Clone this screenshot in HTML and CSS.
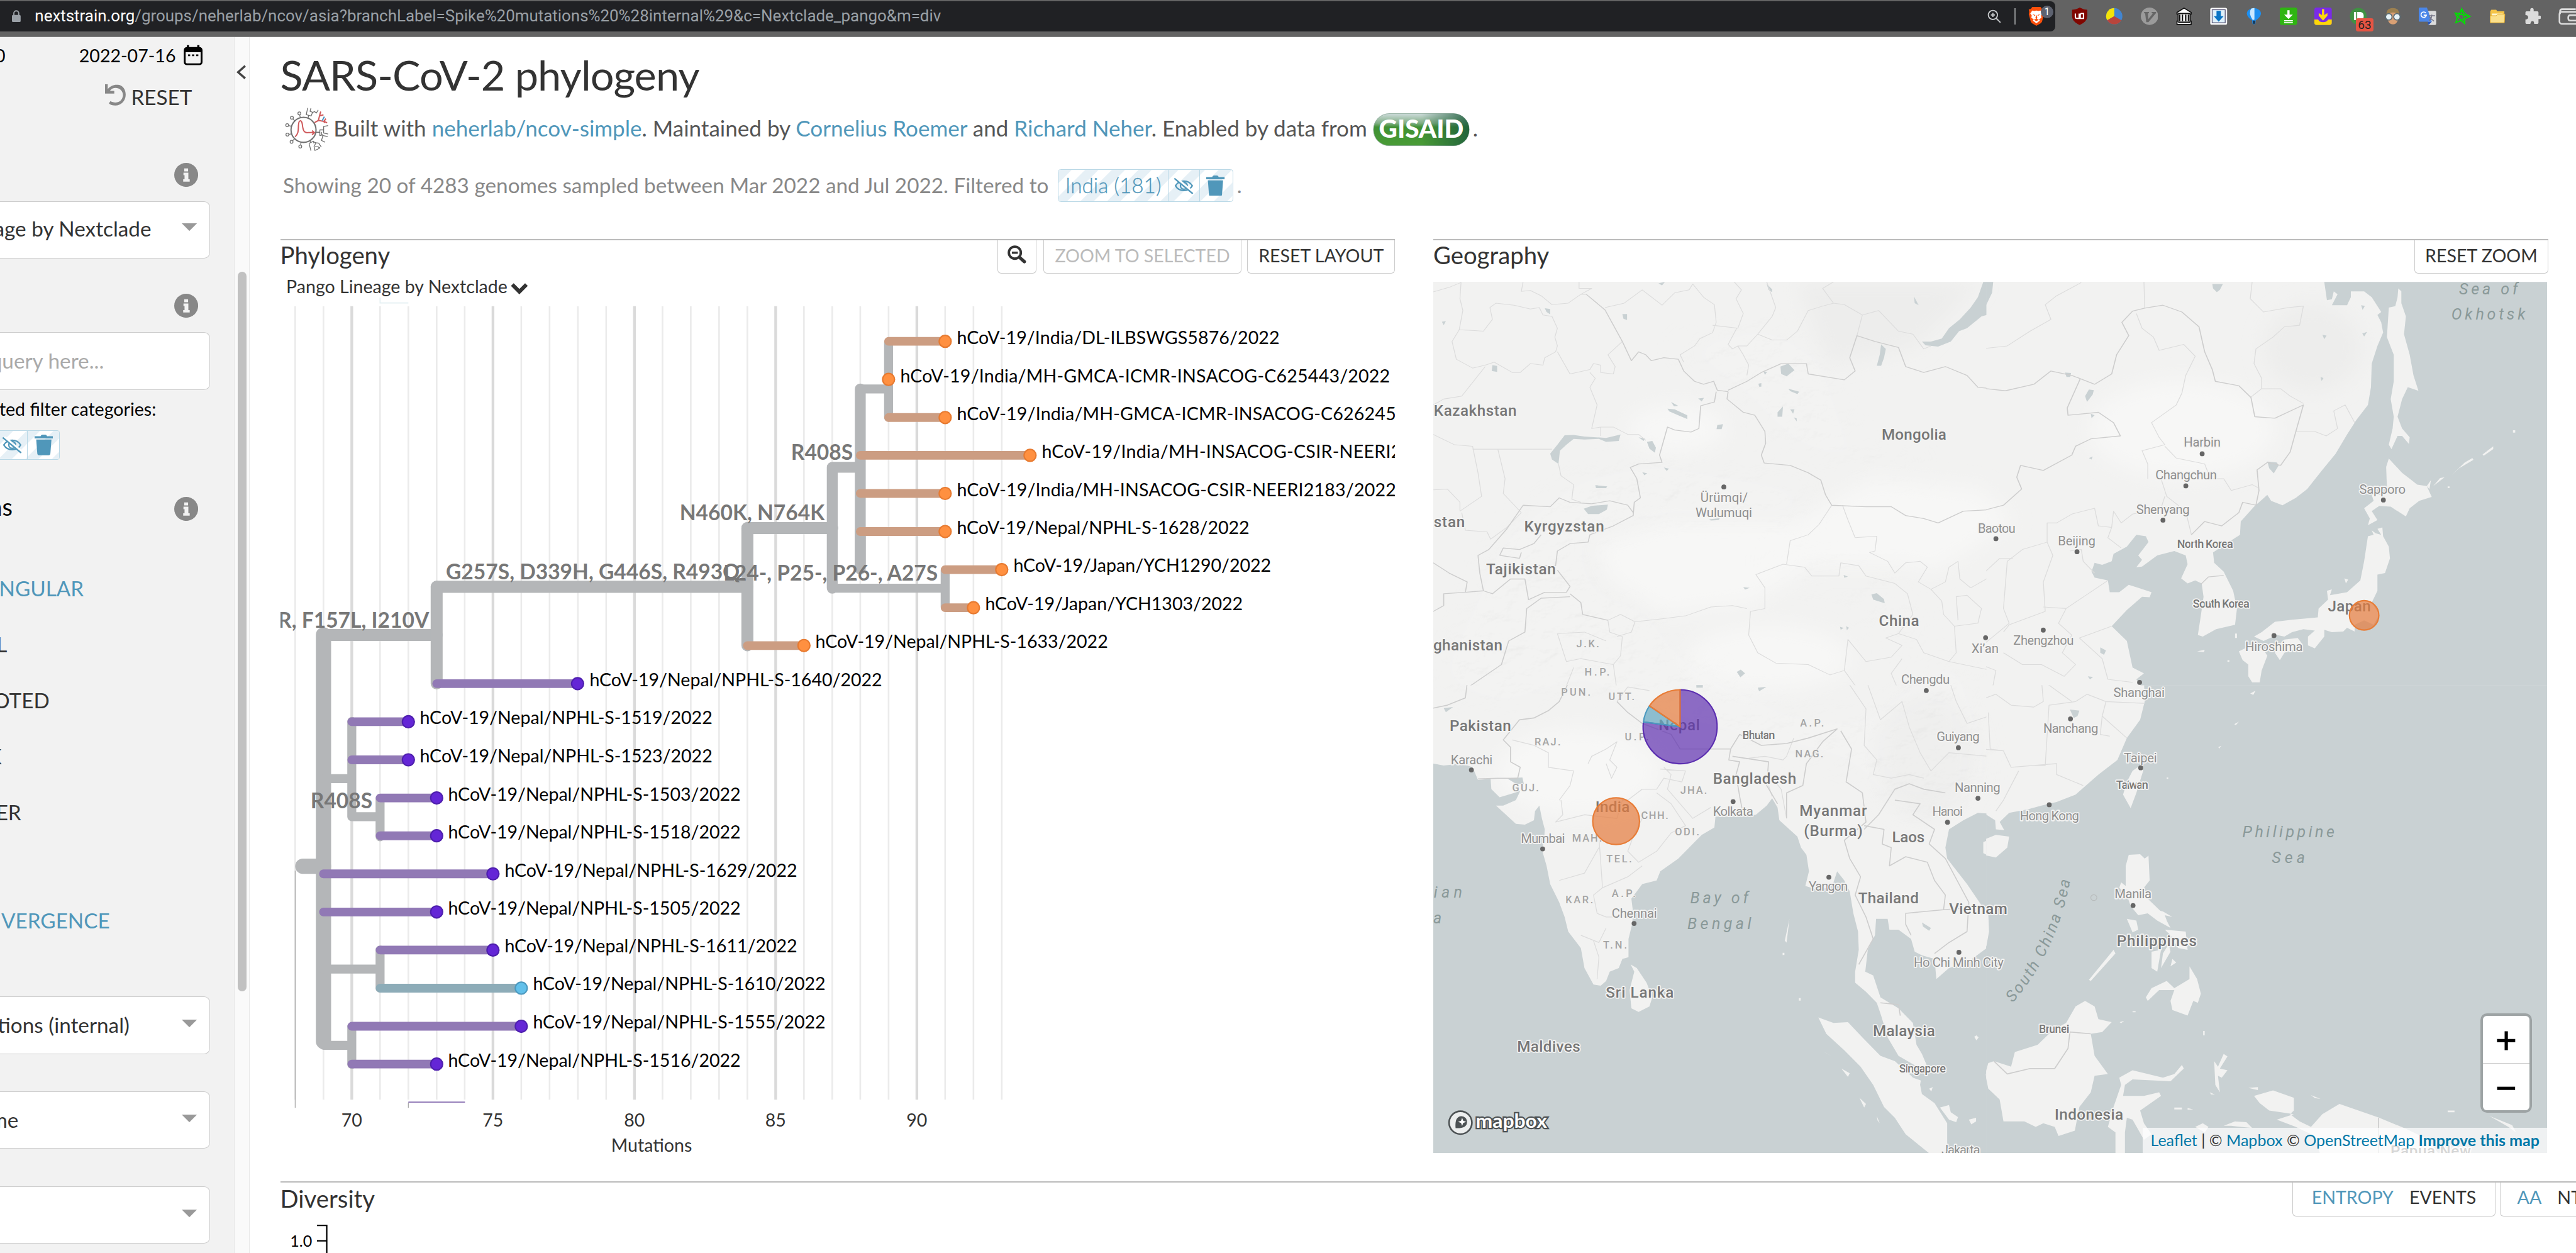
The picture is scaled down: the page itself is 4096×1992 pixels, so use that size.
FILE: index.html
```html
<!DOCTYPE html>
<html lang="en">
<head>
<meta charset="utf-8">
<title>SARS-CoV-2 phylogeny</title>
<link rel="stylesheet" href="styles.css">
</head>
<body>
<svg class="defs" width="0" height="0" aria-hidden="true">
  <defs>
    <pattern id="stripes" width="30" height="30" patternUnits="userSpaceOnUse" patternTransform="rotate(45)"><rect width="15" height="30" fill="#e6f0f6"/></pattern>
    <symbol id="i-info" viewBox="0 0 44 44"><circle cx="22" cy="22" r="22" fill="#888"/><path d="M17 18h9v12h2.500v4.500h-12v-4.500h2.500v-7.500h-2zM18.500 10h7v5.500h-7z" fill="#f2f2f2"/></symbol>
    <symbol id="i-caret" viewBox="0 0 28 14"><path d="M0 0h28L14 14z" fill="#999"/></symbol>
    <symbol id="i-eye" viewBox="0 0 38 32"><g fill="none" stroke="#5097ba" stroke-width="2.600" stroke-linecap="round"><path d="M3 16C10 4 28 4 35 16C28 28 10 28 3 16z"/><circle cx="19" cy="16" r="6.500"/><path d="M19 12a4 4 0 0 1 4 4"/></g><path d="M4 1L37 29" stroke="#fff" stroke-width="5"/><path d="M1 2L36 31" stroke="#5097ba" stroke-width="2.800"/></symbol>
    <symbol id="i-trash" viewBox="0 0 34 38"><path d="M0 3h11q1-3 3-3h6q2 0 3 3h11v4H0zM3 9h28l-2 26q-.3 3-3 3H8q-2.700 0-3-3z" fill="#5097ba"/></symbol>
  </defs>
</svg>

<header class="browser">
  <div class="omnibox">
    <svg class="lock" viewBox="0 0 16 22"><rect y="9" width="16" height="13" rx="2" fill="#9aa0a6"/><path d="M3.500 10V6a4.500 4.500 0 0 1 9 0v4" fill="none" stroke="#9aa0a6" stroke-width="2.200"/></svg>
    <p class="url"><b>nextstrain.org</b>/groups/neherlab/ncov/asia?branchLabel=Spike%20mutations%20%28internal%29&amp;c=Nextclade_pango&amp;m=div</p>
    <svg class="magnify" viewBox="0 0 28 28"><g fill="none" stroke="#c4c7c9" stroke-width="2.400"><circle cx="11" cy="11" r="9"/><path d="M17.500 17.500L26 26M11 7v8M7 11h8"/></g></svg>
    <i class="bar"></i>
    <span class="shield">
      <svg viewBox="0 0 32 38"><path d="M8 1h16l3 4 4 1-1 5 1 4-4 15q-1 2-3 3.500L16 38l-8-4.500Q6 32 5 30L1 15l1-4-1-5 4-1z" fill="#fb4f0b"/><path d="M8 8l4 1 4-1 4 1 4-1 4 6-3 4 1 4-5 4 2 2-7 5-7-5 2-2-5-4 1-4-3-4z" fill="#fff"/><path d="M8 15l6 2-1 2zM24 15l-6 2 1 2zM16 16l2 7-2 2-2-2zM11 26l5-2 5 2-5 3z" fill="#fb4f0b"/></svg>
      <em>1</em>
    </span>
  </div>
  <div class="extensions">
    <svg viewBox="0 0 32 32"><path d="M16 0q7 4 14 4v12q0 10-14 16Q2 26 2 16V4q7 0 14-4z" fill="#800600"/><path d="M8 11v6q0 3 3 3h4V11M19 11h4v9h-6v-6q0-3 2-3z" fill="none" stroke="#fff" stroke-width="2.300"/></svg>
    <svg viewBox="0 0 32 32"><circle cx="16" cy="16" r="15" fill="#4285d0"/><path d="M16 16V1A15 15 0 0 0 3 23.500z" fill="#f4e409"/><path d="M16 16L3 23.500a15 15 0 0 0 26 0z" fill="#b8453c"/></svg>
    <svg viewBox="0 0 32 32"><circle cx="16" cy="16" r="16" fill="#9b9b9b"/><path d="M6 8h9v2l-2 1 1 10 8-10-2-1V8h8v2L14 27h-4L8 11 6 10z" fill="#666"/></svg>
    <svg viewBox="0 0 32 32"><path d="M16 1L29 9v3h-2v13h2v6H3v-6h2V12H3V9z" fill="#fff" stroke="#111" stroke-width="2"/><path d="M8 13v12M13 13v12M19 13v12M24 13v12M5 11h22M5 27h22" stroke="#111" stroke-width="2.500"/></svg>
    <svg viewBox="0 0 32 32"><rect x=".5" y=".5" width="31" height="31" rx="3" fill="#fff"/><rect x="4" y="4" width="24" height="24" fill="#dff1fb" stroke="#557" stroke-width="1.500"/><path d="M12 6h8v10h5l-9 10-9-10h5z" fill="#0a74c4"/></svg>
    <svg viewBox="0 0 32 32"><path d="M3 11a13 10 0 0 1 26 0q0 6-10 13v5l-3 2.500-3-2.500v-5Q3 17 3 11z" fill="#1d8ff0"/><path d="M11 2q-6 8 3 21l3-1V1q-3 0-6 1z" fill="#c9e8ff"/><path d="M14 24h4.500v5L16 31l-2-2z" fill="#163a5e"/></svg>
    <svg viewBox="0 0 32 32"><rect width="32" height="32" rx="4" fill="#2fb512"/><path d="M14 5h4v8h6l-8 8-8-8h6zM8 23h16v2.500H8zM8 27h16v2H8z" fill="#fff"/></svg>
    <svg viewBox="0 0 32 32"><rect width="32" height="32" rx="4" fill="#7a2be8"/><path d="M0 22h7q2 5 9 5t9-5h7v6q0 4-4 4H4q-4 0-4-4z" fill="#fdd808"/><path d="M14 3h4v11l6-4v5l-8 9-8-9v-5l6 4z" fill="#fdd808"/></svg>
    <span class="counter">
      <svg viewBox="0 0 32 32"><circle cx="16" cy="16" r="15.500" fill="#3f9142"/><path d="M8 8h4v15H8zM14 8h6q6 1 6 7.500T20 23h-6z" fill="#fff"/></svg>
      <em>63</em>
    </span>
    <svg viewBox="0 0 32 32"><path d="M4 16Q3 1 16 1t12 15z" fill="#9c8050"/><path d="M6 13q10-8 20 0v8q-3 10-10 10T6 21z" fill="#d9a074"/><g fill="#e8f4f8" stroke="#5b6c74" stroke-width="2"><circle cx="8.500" cy="17" r="6"/><circle cx="23.500" cy="17" r="6"/></g></svg>
    <svg viewBox="0 0 32 32"><path d="M12 6h18q2 0 2 2v22q0 2-2 2H18z" fill="#dcdcdc"/><path d="M2 0h13l9 26H2q-2 0-2-2V2Q0 0 2 0z" fill="#4a86e8"/><path d="M16 26h8l-6 6z" fill="#2b55b5"/><path d="M13 10a5 5 0 1 0 1 4H9" fill="none" stroke="#fff" stroke-width="2"/><path d="M18 15h12M24 13v2q-1 6-5 9M20 17q3 5 8 8" fill="none" stroke="#778" stroke-width="1.800"/></svg>
    <svg viewBox="0 0 32 32"><path d="M14 2l6 28L2 10l28 6L3 28zM14 2l6 9 9 5-9 4 0 10-7-6-10 4 3-9-4-9 9 1z" fill="none" stroke="#00e000" stroke-width="1.800"/></svg>
    <svg viewBox="0 0 32 32"><path d="M3 7l2-3h9l2 3h13v19H3z" fill="#f5c447"/><path d="M6 11h20v13H6z" fill="#fff6d0"/><path d="M3 28V15h11l3-3h13l-1 16z" fill="#fbe08b" stroke="#e2a51f"/></svg>
    <svg viewBox="0 0 32 32"><path d="M12 7q-1-6 3-6t3 6h7q2 0 2 2v6q5-1 5 3t-5 3v7q0 2-2 2h-6q0-5-3-5t-4 5H5q-2 0-2-2v-6q5 0 5-4t-5-4V9q0-2 2-2z" fill="#dcdcdc"/></svg>
    <svg viewBox="0 0 32 32"><g fill="none" stroke="#dcdcdc" stroke-width="3"><rect x="2" y="8" width="34" height="22" rx="4"/><path d="M3 12V7q0-4 4-4h25M36 14H22q-4 0-4 5t4 5h14"/></g></svg>
  </div>
</header>

<div class="page">
  <aside class="sidebar">
    <div class="date"><span>0</span><span>2022-07-16</span>
      <svg viewBox="0 0 35 38"><rect x="2" y="6" width="31" height="30" rx="4" fill="none" stroke="#000" stroke-width="3.400"/><path d="M2 6h31v8H2zM6 1h4v6H6zM25 1h4v6h-4zM8 18h4v3H8zM15.500 18h4v3h-4zM23 18h4v3h-4z"/></svg>
    </div>
    <div class="reset"><svg viewBox="0 0 38 40"><path d="M0 0h5v9C10 2 18 0 24 1c9 1 14 9 14 18 0 12-9 20-19 20-5 0-9-1-12-4l3-4c8 5 22 3 23-11C33 7 16 2 9 12h8v5H0z" fill="#888"/></svg>RESET</div>
    <svg class="info info-color"><use href="#i-info"/></svg>
    <div class="select select-color"><span>age by Nextclade</span><svg><use href="#i-caret"/></svg></div>
    <svg class="info info-filter"><use href="#i-info"/></svg>
    <div class="select query"><span>query here...</span></div>
    <p class="note">ted filter categories:</p>
    <div class="chip side-chip"><svg class="wash"><rect width="100%" height="100%" fill="url(#stripes)"/></svg><span class="cell"><svg class="eye"><use href="#i-eye"/></svg></span><span class="cell"><svg class="trash"><use href="#i-trash"/></svg></span></div>
    <div class="options"><span>ns</span><svg class="info"><use href="#i-info"/></svg></div>
    <ul class="layouts">
      <li class="on w-ngular">NGULAR</li>
      <li class="w-l">L</li>
      <li class="w-oted">OTED</li>
      <li class="w-k">K</li>
      <li class="w-er">ER</li>
    </ul>
    <p class="metric on">VERGENCE</p>
    <div class="selects">
      <div class="select s-labels"><span>tions (internal)</span><svg><use href="#i-caret"/></svg></div>
      <div class="select s-tips"><span>me</span><svg><use href="#i-caret"/></svg></div>
      <div class="select"><span></span><svg><use href="#i-caret"/></svg></div>
    </div>
  </aside>
  <div class="gutter">
    <svg class="collapse" viewBox="0 0 18 27"><path d="M16 2L3 13.500L16 25" fill="none" stroke="#444" stroke-width="4"/></svg>
    <div class="thumb"></div>
  </div>

  <main class="main">
    <h1>SARS-CoV-2 phylogeny</h1>
    <div class="byline">
      <svg class="virus" viewBox="18 15 270 255">
        <g fill="none" stroke="#707070" stroke-width="6"><circle cx="145" cy="145" r="69" stroke-width="7"/>
        <g stroke-width="4.500"><circle cx="122" cy="54" r="8"/><circle cx="81" cy="78" r="8"/><circle cx="55" cy="119" r="8"/><circle cx="56" cy="171" r="8"/><circle cx="79" cy="211" r="8"/><circle cx="127" cy="237" r="8"/><path d="M124 62l3 15M87 84l10 12M63 121l14 4M64 170l13-3M85 205l11-12M129 229l2-14"/>
        <path d="M170 79l4-16M168 24l-8 37 27 7 8-20M186 25l-5 17 14 6 15-5M195 48l-8 20M208 46l8 6 10-17M215 158h20M235 143v33h9M235 145h21M281 121l-25 5v36l25 6M256 145v15M244 176v-20M244 172h6v12l-6 19 20 10M250 176l28 6M180 205l4 8M176 222l10 38M174 220l25-12 4 12M199 210l14 6 16 2 14 22M213 218l-10 18 5 22 18-8 10-8M208 238h18l8 10"/></g></g>
        <g fill="none" stroke="#cf5a5c" stroke-width="7"><path d="M98 183C118 168 116 145 117 122C118 88 134 88 138 112C142 150 148 163 170 160H200M192 149l13 11-13 12" /><path d="M206 105l21-12 6-25 7-24M233 68l22-6M227 93l31 5 17 8M258 98l10-15M262 99l-4 8"/></g>
        <path d="M248 94l12-22" stroke="#4a94c4" stroke-width="7"/>
      </svg>
      <p>Built with <a>neherlab/ncov-simple</a>. Maintained by <a>Cornelius Roemer</a> and <a>Richard Neher</a>. Enabled by data from</p>
      <svg class="gisaid" viewBox="0 0 178 64"><defs><linearGradient id="gg" x2="0" y2="1"><stop offset="0" stop-color="#cfdcdc"/><stop offset=".3" stop-color="#7fae84"/><stop offset=".42" stop-color="#3f9034"/><stop offset="1" stop-color="#4a9c36"/></linearGradient></defs>
        <linearGradient id="ge" x2="1" y2="0"><stop offset=".5" stop-color="#1d5c3c" stop-opacity="0"/><stop offset="1" stop-color="#1d5c3c" stop-opacity=".85"/></linearGradient>
        <rect x="1" y="3" width="176" height="59" rx="29" fill="url(#gg)" stroke="#8aa898" stroke-width="1"/><rect x="1" y="3" width="176" height="59" rx="29" fill="url(#ge)"/>
        <text x="89" y="47" text-anchor="middle" textLength="156" lengthAdjust="spacingAndGlyphs">GISAID</text></svg>
      <p>.</p>
    </div>
    <div class="summary">
      <p>Showing 20 of 4283 genomes sampled between Mar 2022 and Jul 2022. Filtered to</p>
      <div class="chip main-chip"><svg class="wash"><rect width="100%" height="100%" fill="url(#stripes)"/></svg><span class="cell name">India (181)</span><span class="cell"><svg class="eye"><use href="#i-eye"/></svg></span><span class="cell"><svg class="trash"><use href="#i-trash"/></svg></span></div>
      <p class="stop">.</p>
    </div>

    <div class="panels">
      <section class="panel">
        <div class="head">
          <h2>Phylogeny</h2>
          <div class="buttons">
            <span class="btn b-zoom"><svg viewBox="0 0 34 34"><circle cx="13.500" cy="13.500" r="11" fill="none" stroke="#333" stroke-width="4.500"/><path d="M8 13.500h11M22 22l10 9" stroke="#333" stroke-width="4"/><path d="M23 23l8 7" stroke="#333" stroke-width="6" stroke-linecap="round"/></svg></span>
            <span class="btn b-sel">ZOOM TO SELECTED</span>
            <span class="btn b-reset">RESET LAYOUT</span>
          </div>
        </div>
        <p class="legend">Pango Lineage by Nextclade<svg viewBox="0 0 32 22"><path d="M3 4l13 13L29 4" fill="none" stroke="#333" stroke-width="7"/></svg></p>
        <svg class="tree" viewBox="515 547 2048 1585">
          <path class="minor" d="M542 563V2021M594 563V2021M698 563V2021M750 563V2021M802 563V2021M853.500 563V2021M957.500 563V2021M1009.500 563V2021M1061.500 563V2021M1113.500 563V2021M1217 563V2021M1269 563V2021M1321 563V2021M1373 563V2021M1477 563V2021M1529 563V2021M1580.500 563V2021M1632.500 563V2021M1736.500 563V2021M1788.500 563V2021M1840.500 563V2021"/>
          <path class="major" d="M646 563V2021M905.500 563V2021M1165.500 563V2021M1425 563V2021M1684.500 563V2021"/>
          <path d="M698 547V557H750" fill="none" stroke="#e4eff2" stroke-width="2"/>
          <path d="M542 1600V2036" stroke="#aaa" stroke-width="1.500"/>
          <path d="M750 2036V2026" stroke="#aaa" stroke-width="1.500"/><path d="M750 2025.500H854" stroke="#8d74b4" stroke-width="2"/>
          <g class="trunk">
            <g class="t28"><path d="M556 1592H594"/><path d="M594 1167V1914" /></g>
            <g class="t22"><path d="M594 1167H802M802 1078.500H1373"/></g>
            <g class="t22"><path d="M802 1078.500V1256"/><path d="M1373 970.500V1186"/><path d="M1373 970.500H1529"/></g>
            <g class="t20"><path d="M1529 859V1081M1529 859H1580.500M1580.500 715V1046"/><path d="M1580.500 1040V976"/></g>
            <g class="t17"><path d="M1529 1081H1736.500V1048M1736.500 1081V1116M1580.500 715H1632.500V630M1632.500 715V767"/>
            <path d="M594 1431H646V1326M646 1431V1501H698V1468M698 1501V1538M594 1781H698V1746M698 1781V1816M594 1921H646V1887M646 1921V1956"/></g>
          </g>
          <path class="limb orange" d="M1632.500 627.500H1736M1632.500 767.500H1736M1580.500 837H1892M1580.500 907H1736M1580.500 977H1736M1736.500 1047H1840M1736.500 1117H1788M1373 1186.500H1477"/>
          <path class="limb purple" d="M802 1256.500H1061M646 1326.500H750M646 1396.500H750M698 1466.500H802M698 1536H802M594 1606H905M594 1676H802M698 1746H905M646 1886H957M646 1955.500H802"/>
          <path class="limb blue" d="M698 1816H957"/>
          <g class="clade">
            <text x="1567" y="845">R408S</text><text x="1515" y="956">N460K, N764K</text><text x="1359" y="1065">G257S, D339H, G446S, R493Q</text><text x="1723" y="1067">L24-, P25-, P26-, A27S</text><text x="788" y="1154">R, F157L, I210V</text><text x="684" y="1486">R408S</text>
          </g>
          <g class="tip-orange"><circle cx="1736.500" cy="627.500" r="11"/><circle cx="1632.500" cy="697.500" r="11"/><circle cx="1736.500" cy="767.500" r="11"/><circle cx="1892.500" cy="837" r="11"/><circle cx="1736.500" cy="907" r="11"/><circle cx="1736.500" cy="977" r="11"/><circle cx="1840.500" cy="1047" r="11"/><circle cx="1788.500" cy="1117" r="11"/><circle cx="1477" cy="1186.500" r="11"/></g>
          <g class="tip-purple"><circle cx="1061" cy="1256.500" r="11"/><circle cx="750" cy="1326.500" r="11"/><circle cx="750" cy="1396.500" r="11"/><circle cx="802" cy="1466.500" r="11"/><circle cx="802" cy="1536" r="11"/><circle cx="905.500" cy="1606" r="11"/><circle cx="802" cy="1676" r="11"/><circle cx="905.500" cy="1746" r="11"/><circle cx="957.500" cy="1886" r="11"/><circle cx="802" cy="1955.500" r="11"/></g>
          <circle class="tip-blue" cx="957.500" cy="1816" r="11"/>
          <g class="strain">
            <text x="1758" y="632.500" textLength="593">hCoV-19/India/DL-ILBSWGS5876/2022</text>
            <text x="1654" y="702.500" textLength="900">hCoV-19/India/MH-GMCA-ICMR-INSACOG-C625443/2022</text>
            <text x="1758" y="772.500" textLength="807">hCoV-19/India/MH-GMCA-ICMR-INSACOG-C626245</text>
            <text x="1914" y="842" textLength="661">hCoV-19/India/MH-INSACOG-CSIR-NEERI2</text>
            <text x="1758" y="912" textLength="807">hCoV-19/India/MH-INSACOG-CSIR-NEERI2183/2022</text>
            <text x="1758" y="982">hCoV-19/Nepal/NPHL-S-1628/2022</text>
            <text x="1862" y="1051">hCoV-19/Japan/YCH1290/2022</text>
            <text x="1810" y="1121">hCoV-19/Japan/YCH1303/2022</text>
            <text x="1498" y="1191">hCoV-19/Nepal/NPHL-S-1633/2022</text>
            <text x="1083" y="1261">hCoV-19/Nepal/NPHL-S-1640/2022</text>
            <text x="771" y="1331">hCoV-19/Nepal/NPHL-S-1519/2022</text>
            <text x="771" y="1401">hCoV-19/Nepal/NPHL-S-1523/2022</text>
            <text x="823" y="1471.500">hCoV-19/Nepal/NPHL-S-1503/2022</text>
            <text x="823" y="1541">hCoV-19/Nepal/NPHL-S-1518/2022</text>
            <text x="927" y="1611">hCoV-19/Nepal/NPHL-S-1629/2022</text>
            <text x="823" y="1681">hCoV-19/Nepal/NPHL-S-1505/2022</text>
            <text x="927" y="1750">hCoV-19/Nepal/NPHL-S-1611/2022</text>
            <text x="979" y="1820">hCoV-19/Nepal/NPHL-S-1610/2022</text>
            <text x="979" y="1890">hCoV-19/Nepal/NPHL-S-1555/2022</text>
            <text x="823" y="1960">hCoV-19/Nepal/NPHL-S-1516/2022</text>
          </g>
          <g class="axis"><text x="646" y="2070.500">70</text><text x="905.500" y="2070.500">75</text><text x="1165.500" y="2070.500">80</text><text x="1425" y="2070.500">85</text><text x="1684.500" y="2070.500">90</text><text x="1197" y="2117">Mutations</text></g>
        </svg>
      </section>

      <section class="panel">
        <div class="head geo"><h2>Geography</h2><div class="buttons"><span class="btn b-geo">RESET ZOOM</span></div></div>
        <div class="map">
        <svg class="tiles" viewBox="2634 519 2047 1601">
          <defs>
            <clipPath id="c1"><rect x="2620" y="500" width="1030.500" height="760.500"/></clipPath><clipPath id="c2"><rect x="3650" y="500" width="1040" height="760.500"/></clipPath>
            <clipPath id="c3"><rect x="2620" y="1260" width="1030.500" height="870"/></clipPath><clipPath id="c4"><rect x="3650" y="1260" width="1040" height="870"/></clipPath>
            <filter id="soft" x="-20%" y="-20%" width="140%" height="140%"><feGaussianBlur stdDeviation="18"/></filter>
            <filter id="relief" x="0" y="0" width="100%" height="100%"><feTurbulence type="fractalNoise" baseFrequency=".022 .03" numOctaves="4" seed="7"/><feDiffuseLighting lighting-color="#fff" surfaceScale="5" diffuseConstant="1.150"><feDistantLight azimuth="235" elevation="60"/></feDiffuseLighting></filter>
            <filter id="fade" x="-20%" y="-20%" width="140%" height="140%"><feGaussianBlur stdDeviation="30"/></filter>
            <mask id="hills" maskUnits="userSpaceOnUse" x="2634" y="519" width="2047" height="1601"><g filter="url(#fade)" fill="#fff"><path d="M2700 1130L2760 990L2900 880L3040 850L3330 900L3320 950L3060 950L2900 990L2930 1090L3030 1120L3080 1200L3280 1310L3420 1330L3600 1200L3660 1450L3500 1500L3400 1400L3100 1330L2900 1250L2760 1300L2640 1250z"/><path d="M3060 640L3250 600L3350 660L3400 820L3560 850L3480 880L3300 820L3180 700z"/><path d="M3250 1000L3450 1050L3560 1180L3480 1180L3380 1090L3240 1060z" opacity=".7"/></g></mask>
          </defs>
          <rect class="land" x="2634" y="519" width="2047" height="1601"/>
          <g fill="#f7f7f6" filter="url(#soft)"><path d="M2930 1000L3060 960L3300 960L3440 880L3640 900L3700 960L3560 1050L3500 1040L3330 1040L3220 1110L3060 1130L2960 1070z"/><ellipse cx="3080" cy="790" rx="90" ry="45"/><ellipse cx="4010" cy="790" rx="170" ry="90"/><ellipse cx="2900" cy="1420" rx="150" ry="80"/><ellipse cx="3250" cy="1210" rx="150" ry="60"/></g>
          <g fill="#ededec" filter="url(#soft)"><path d="M3300 520L3640 520L3520 640L3360 670z"/><ellipse cx="4250" cy="640" rx="90" ry="80"/><ellipse cx="3540" cy="1390" rx="90" ry="110"/></g>
          <g mask="url(#hills)"><rect x="2634" y="519" width="2047" height="1601" filter="url(#relief)" class="shade"/></g>

          <g clip-path="url(#c1)"><g transform="translate(2620 420) scale(.66327 .54209)">
            <g class="sea">
              <path d="M1545 183h40v102L1540 300L1500 340L1478 350L1455 385L1420 402L1385 398L1375 385L1400 385L1430 375L1450 340L1480 310L1510 270L1530 235z"/>
              <path d="M983 470L1005 460L1022 482L1000 503L985 495zM1262 395L1275 410L1270 440L1262 467L1250 467L1258 430zM1353 232L1366 262L1355 255zM345 765L365 735L385 703L410 702L440 707L500 712L540 700L535 722L500 725L480 715L440 717L410 715L390 735L372 755L368 800L350 785zM613 725L628 722L638 745L635 762L620 748zM590 710l18 4-4 8zM438 952L460 942L505 938L502 955L480 970L450 970zM670 613L690 615L725 635L725 648L700 635L675 622zM680 590L700 603L688 605zM545 292L558 292L558 312L548 308zM185 465L198 468L198 488L183 485zM330 272L345 275L345 293L335 285zM45 318L56 316L50 330zM1005 545L1035 555L1030 563L1010 553zM975 625L990 605L988 640L975 640zM1010 615L1022 615L1018 630zM808 668L824 665L820 682L806 682zM1235 1242L1250 1238L1270 1258L1272 1272L1240 1260zM470 872L503 876L500 882L472 882zM785 988L815 984L812 990L790 992zM880 1218L898 1220L885 1226zM862 1505L873 1497L885 1510L872 1523zM1158 1176l12 6-10 4zM1148 1352l10 4-8 6zM1165 1350l8 5-6 8zM945 190l15 18v10l-10-8zM645 188l18-5-8 12zM755 578l16-2-6 12zM660 812l14 4-6 8zM600 828l14 4-8 6zM750 1550h18v12h-18zM920 1558l24-2-18 20zM922 528l8-2v12h-6zM936 486l10 2-6 10zM1020 642l8 4v10z"/>
            </g>
            <path class="state" d="M21 217L68 200L98 185L95 240L103 280L93 345L135 348L160 350L185 310L178 270L195 255L245 262L290 275L315 270L325 295L350 300L365 340L358 370L365 400L360 420L330 440L325 465L290 460L262 490L240 490L190 455L165 465L130 475L85 445L73 385L93 345M165 470L100 570L50 580L21 600M270 183L265 215L290 212L320 230L350 260L395 255L430 225L460 205L425 205L425 183M430 225L445 225M365 420L400 495L455 480L465 460L485 465L485 490L520 495L525 470L505 430L545 385M497 270L550 255L600 210L655 262L690 220L730 210L740 190M740 190L770 235L800 260L805 320L795 355L760 375L745 400L705 430L715 455M795 330L865 340L880 290L860 240L875 210L855 183M945 183L970 270L960 300L920 360L890 400L865 400L850 410L838 395L862 340M865 400L880 430L895 465L890 500M920 360L960 380L1000 380L1030 350L1060 280L1100 265L1130 255L1100 205L1130 183M1130 255L1160 260L1210 295L1255 280L1310 350L1350 360L1380 410L1400 400M1195 365L1210 295M455 490L470 510L455 540L475 600L460 680L485 675L485 705M485 675L520 675L560 700L590 700L610 720M21 700L80 735L130 740L145 830L155 910L95 960L95 930L60 885L21 888M130 750L350 750M200 750L220 850L215 900L265 965M368 800L375 840L410 870L405 920L430 930M100 965L110 1025L170 1030L180 1055L225 1015L265 965M1000 1140L1010 1060L1060 1040L1090 1005L1125 940M1155 940L1170 990L1190 1050L1250 1045L1245 1095L1230 1100L1280 1130L1300 1170L1330 1135L1370 1130L1390 1150L1365 1200L1400 1225L1440 1200L1450 1150L1475 1130L1480 1190L1510 1220L1568 1180M990 1140L1050 1150L1070 1180L1145 1180L1150 1135L1200 1145L1220 1180L1300 1205L1335 1240L1350 1310L1310 1375M990 1140L915 1175L940 1220L940 1290L900 1300L895 1380L920 1440L970 1475L1060 1480L1120 1515L1160 1500L1170 1395L1220 1470L1290 1455L1320 1415L1275 1390L1310 1375L1360 1395L1380 1440L1450 1470L1470 1440L1465 1350L1435 1310L1430 1265L1400 1225M890 1290L850 1280L790 1285L720 1315L655 1325L580 1335M1465 1350L1530 1340L1540 1290L1500 1245L1470 1250L1475 1330M1450 1470L1568 1500M1310 1568L1290 1510L1320 1460M1160 1500L1200 1568M530 1385L570 1370L580 1335L540 1310L505 1330L510 1370L545 1385L540 1450L520 1480L530 1568M365 1375L440 1370L500 1400M365 1375L390 1470L430 1460L520 1480M385 1568L410 1490"/>
            <path class="nation" d="M445 225L497 278L545 385L570 450L590 420L610 430L625 450L660 440L700 445L715 485L745 520L770 530L798 520L808 550L838 555M805 555L800 590L762 603L757 680L735 692L690 685L670 675L648 770L655 795L590 800L567 812L585 850L595 915L578 930L575 975L520 1010L455 1040L450 1065L400 1070L365 1095L360 1145L300 1145M838 555L835 580L880 625L912 635L940 690L942 730L930 770L938 797L1010 805L1060 830L1095 855L1108 905L1125 940L1220 945L1290 945L1330 975L1380 985L1420 1000L1490 960L1568 955M838 550L890 520L930 490L985 460L1055 460L1060 495L1160 515L1190 485L1175 440L1195 365L1245 385L1310 405L1330 470L1380 490L1440 470L1500 500L1530 540L1568 545M575 965L560 940L510 925L460 935L400 930L370 915L345 945L270 940L225 1020L175 1090L145 1110L150 1170L160 1230L185 1240L235 1190L275 1190L285 1260L330 1235L390 1235L400 1215L365 1160M21 1135L65 1170L115 1200L110 1235L50 1240L50 1280L21 1300M110 1235L160 1230M400 1250L320 1255L280 1290L275 1370L230 1400L210 1480L150 1530L105 1568M400 1240L430 1270L435 1310L505 1330M205 1110L215 1085L260 1090L300 1070L320 1040M265 1100L260 1120L205 1110"/>
          </g></g>

          <g clip-path="url(#c2)"><g transform="translate(3640 420) scale(.6977 .54209)">
            <path class="sea" d="M905 183L912 245L925 242L930 215L940 225L925 262L965 262L975 235L975 215L1010 215L1030 235L1055 285L1045 295L1055 320L1060 355L1045 400L1030 460L1028 540L1020 600L990 650L965 700L935 765L900 820L860 885L830 915L795 940L765 925L755 905L720 945L685 995L683 1040L612 1100L615 1135L640 1165L665 1230L675 1290L670 1345L620 1360L585 1385L572 1380L578 1330L587 1250L582 1205L565 1195L545 1205L528 1188L545 1140L540 1110L510 1095L465 1110L425 1148L410 1150L425 1125L415 1110L442 1065L435 1045L410 1040L385 1080L350 1105L345 1130L320 1142L300 1135L292 1165L300 1185L335 1195L340 1235L365 1235L390 1210L415 1220L450 1235L445 1252L425 1250L385 1295L345 1350L385 1400L400 1490L430 1510L410 1530L430 1568V1600H1510V183z"/>
            <path class="sea" d="M-10 183L33 183L30 220L15 260L-10 285zM275 570L285 548L298 550L295 565L280 590zM755 792L780 795L785 805L772 832L760 815zM222 490L238 492L236 505L226 505zM610 190L638 190L630 210L622 218L612 205zM900 362L911 365L905 377zM1005 358L1018 352L1010 368zM1002 262l10 2-6 14zM895 505l8 4-5 10zM315 1422L330 1432L325 1447L315 1440zM282 1520l14 2-8 8zM285 780l10-5-3 10zM290 630l10 5-8 10z"/>
            <g class="island"><path d="M1100 205L1108 215L1108 255L1120 300L1115 360L1130 430L1140 500L1153 552L1125 540L1110 580L1098 640L1110 680L1130 710L1128 732L1110 705L1098 705L1082 750L1075 735L1085 680L1088 640L1080 580L1088 520L1088 430L1070 370L1075 270L1092 265L1098 235z"/><path d="M1075 782L1110 830L1150 870L1175 875L1188 912L1155 925L1130 950L1120 978L1080 945L1050 942L1030 960L1045 990L1020 1008L1025 985L1010 950L1035 925L1030 905L1060 905L1070 880L1068 810zM1175 875L1186 855L1182 885z"/><path d="M1058 1015L1060 1045L1075 1080L1078 1120L1065 1170L1045 1175L1045 1230L1030 1270L1050 1310L1035 1345L1010 1330L985 1345L985 1368L965 1355L955 1368L925 1370L905 1362L905 1385L880 1425L862 1415L862 1385L880 1365L850 1360L820 1370L800 1385L780 1380L745 1400L720 1385L740 1370L775 1335L820 1328L870 1322L888 1320L890 1290L915 1260L912 1230L925 1225L920 1245L965 1235L1000 1195L1010 1130L1020 1045L1035 1040L1030 1025L1040 1035L1055 1040L1045 1020z"/><path d="M680 1435L720 1410L745 1430L755 1450L740 1500L735 1540L715 1540L705 1520L705 1480L690 1465zM780 1420L800 1395L835 1390L848 1412L820 1432L800 1440L788 1465L775 1440zM1192 875L1210 848L1222 845zM1240 838L1275 795L1295 780L1298 786L1260 815zM1322 768L1350 740L1350 750L1325 772zM1402 686h6v8h-6zM570 1435L590 1430L588 1438zM958 1188L968 1192L962 1205zM1230 876h5v6h-5zM670 1375h5v15h-5zM650 1465h5v6h-5z"/></g>
            <path class="state" d="M0 410L70 400L130 350L185 310L170 260L200 230L265 185M430 183L432 270M410 290L425 340L455 370L470 415L535 395L565 435L540 500L530 560L515 600L450 660L470 710L485 735L425 755L440 800L440 850M485 740L515 780L590 800L605 850L640 850L660 890L715 870L730 880M715 183L710 240L745 285L810 270L850 265L840 330L800 335L770 370L725 410L720 460L740 510L740 545L710 575M740 545L790 545L815 570L850 595M830 690L880 690L910 705L940 680L930 620L960 600L985 660M475 850L490 910L540 960L555 1040M485 910L475 950L400 970L370 1000L350 960L345 1015L335 1050L370 1085M345 1015L310 1010L300 950L240 970L200 1000L175 1000L175 1065L110 1090L70 1130L60 1290L75 1340L0 1420M175 1065L190 1110L165 1200L170 1300L75 1345L60 1370M235 1095L265 1090L270 1130L300 1170M335 1195L225 1290L165 1285M225 1290L205 1340L240 1380L215 1440L250 1480L220 1520L160 1480L110 1480L60 1440M345 1350L260 1390L320 1460L335 1530L400 1540M0 1180L50 1120L85 1120M30 1568L40 1500L0 1480"/>
            <path class="nation" d="M0 543L65 552L140 530L185 485L240 500L300 530L345 495L358 430L390 365L372 320L400 282L432 272L480 262L530 285L575 335L590 420L610 480L618 520L680 535L712 575L722 640L775 645L850 600L828 700L815 760L790 805L755 795L728 820L733 890L725 940L690 930L680 965L635 1010L590 995L555 1040M262 512L228 610L230 635L310 625L350 660L368 705L290 715L250 740L240 770L165 822L105 805L95 845L108 885L60 940L0 960M580 1208L600 1183L640 1178"/>
          </g></g>

          <g clip-path="url(#c3)"><g transform="translate(2620 1250) scale(.66327 .67092)">
            <path class="sea" d="M10 228L50 235L100 230L130 240L145 275L180 272L182 300L205 322L240 312L262 305L250 330L215 345L195 345L250 395L275 397L300 385L303 360L315 345L322 380L330 410L328 440L322 465L335 510L345 560L370 610L385 650L395 690L430 735L440 790L465 835L485 838L500 825L510 800L535 790L545 765L562 760L562 710L572 670L575 640L570 600L600 560L640 550L650 525L700 490L745 445L765 425L800 405L803 375L880 375L915 370L945 345L960 325L975 350L980 385L1030 430L1040 460L1055 480L1062 525L1052 565L1085 575L1115 570L1130 555L1140 525L1160 550L1175 580L1185 640L1198 690L1200 740L1190 800L1190 830L1220 855L1250 885L1262 920L1280 980L1310 1030L1370 1065L1390 1060L1375 1025L1360 1000L1350 940L1310 900L1260 870L1240 810L1218 800L1225 740L1245 700L1248 655L1280 655L1285 685L1310 685L1345 710L1355 745L1375 755L1410 765L1415 820L1450 790L1500 775L1555 735L1568 690L1562 650L1500 560L1445 490L1440 460L1450 410L1490 385L1530 365L1600 370V1320H10zM225 270L268 268L272 285L250 285zM50 78l26-3-20 14zM920 22l24-2-20 12zM750 14h18v8h-18zM1375 665L1400 680L1395 688L1378 676z"/>
            <g class="island"><path d="M568 780L585 790L612 830L628 870L620 895L590 910L570 900L565 850L578 800z"/><path d="M1088 925L1130 940L1170 938L1210 980L1260 1030L1300 1045L1345 1085L1370 1110L1375 1135L1410 1160L1445 1215L1445 1320L1395 1297L1330 1245L1300 1200L1270 1170L1240 1110L1205 1060L1160 1015L1110 970z"/><path d="M1152 1065L1175 1078L1170 1088zM1202 1145L1220 1162L1215 1172zM1100 1018L1125 1030L1112 1024zM1250 1195l8 20-6-8zM1425 1172L1450 1165L1455 1185L1475 1198L1470 1212L1450 1205zM1505 1205L1525 1200L1525 1210L1512 1218zM1600 1045L1568 1050L1552 1080L1555 1110L1568 1145L1600 1160zM1600 430L1568 435L1545 445L1545 475L1568 487L1600 490zM1008 655L1000 720L995 715zM989 748h5v6h-5zM1034 872h5v7h-5zM1520 978l6-4 6 6-6 8zM1395 1120l10-4-4 12zM1350 1090L1372 1098L1368 1120z"/></g>
            <path class="state" d="M375 330L380 370L360 390L440 370L530 380L545 330L560 330L600 300L640 300L660 270L710 280L720 250L650 245M240 165L300 180L340 200L340 240L410 250L400 290L370 330M450 230L460 210L500 190L530 170L510 220L530 240L515 270L500 230M600 380L575 430L560 470L590 500L640 470L680 420L720 400L680 340L640 310M480 430L490 570L465 590L475 640L500 650L540 650M370 550L440 530L480 460M490 570L560 540L600 510M430 700L480 720L500 680M465 715L480 760L475 820M530 60L560 20L620 30M1165 0L1220 80L1215 180L1250 220L1240 260L1290 270L1340 260L1380 270M1220 0L1260 110L1320 60L1340 130L1370 200L1400 250L1450 200L1560 210M1560 100L1500 120L1470 60L1450 0M660 240L680 260L670 300L705 340L740 380L790 350M895 215L940 210L990 220L1000 210L1020 160M950 290L960 320M1000 380L985 300L960 270"/>
            <path class="nation" d="M400 0L370 60L340 85L300 105L260 110L215 165L235 185L235 225L262 240L255 270L200 270L145 272M21 78L60 70L110 50L115 10L130 0M530 60L560 90L600 120L680 150L705 190L790 190L845 190L870 150L930 180L1000 175L1060 160L1140 135L1100 170L1055 230L1045 290L1000 310L1000 380M845 190L840 220L870 225L860 260L870 320L880 370M850 210L950 225L945 290L975 340M1150 140L1180 190L1165 280L1210 310L1220 390L1160 440L1175 490L1205 540L1190 590L1220 650L1240 710L1200 780M1215 410L1255 370L1300 300L1340 285L1380 300L1440 310M1215 400L1270 410L1265 450L1290 460L1285 510L1330 485L1390 500L1410 550L1440 590L1435 630L1330 640L1330 670L1345 700M1300 330L1370 340L1350 370L1410 410L1395 450L1440 490L1505 610L1500 690L1450 720L1410 750M1435 630L1505 625M1260 885L1310 890L1315 920"/>
          </g></g>

          <g clip-path="url(#c4)"><g transform="translate(3640 1250) scale(.6977 .67092)">
            <path class="sea" d="M430 0L432 60L420 110L385 160L360 220L310 260L250 315L200 335L160 345L125 355L75 365L50 390L62 412L40 410L38 385L15 370L-20 370V570L0 590L20 640L22 690L15 730L-20 750V1320H1510V0zM235 82L260 85L255 100L245 105zM365 0h20v6h-14z"/>
            <g class="island"><path d="M-10 445L5 440L40 425L75 430L70 460L40 487L8 480L-10 485zM420 235L428 250L410 310L395 352L375 315L385 280L400 250z"/><path d="M390 480L420 478L432 490L442 482L445 550L430 570L440 600L480 640L500 680L465 660L440 640L415 645L395 620L385 590L365 570L370 555L382 565L382 510z"/><path d="M385 655L410 660L415 685L400 692zM485 685L540 690L545 740L520 735L500 700zM450 745L475 740L465 800L450 790zM495 725L500 745L475 790L480 750zM505 765L515 775L500 785zM440 625L480 635L505 650L485 645L490 660L455 640zM350 740L355 750L290 825L285 822zM550 785L570 820L580 860L572 885L560 880L545 920L505 905L500 880L510 850L470 850L440 880L435 870L450 845L490 825L510 845L550 820z"/><path d="M275 880L300 895L310 930L345 938L320 965L290 970L300 1030L335 1080L300 1085L290 1130L260 1170L248 1235L205 1250L195 1225L165 1215L145 1225L115 1210L60 1210L50 1150L20 1120L12 1080L20 1050L35 1045L80 1060L90 1020L150 1000L190 960L225 940L250 895z"/><path d="M370 1110L365 1090L400 1070L480 1090L510 1080L530 1055L535 1065L500 1100L400 1095L380 1110L375 1140L430 1140L470 1130L475 1140L420 1180L430 1215L450 1245L430 1260L400 1205L385 1200L380 1240L380 1320L355 1320L355 1240L335 1225L350 1170zM615 1045L625 1060L640 1025L650 1032L630 1065L650 1070L635 1090L625 1085L630 1130L618 1110z"/><path d="M720 1140L770 1125L825 1145L825 1180L815 1190L840 1210L870 1225L900 1190L945 1162L1050 1200L1120 1230L1180 1260L1220 1320H900L880 1250L830 1225L780 1205L825 1190L760 1180L735 1160zM640 1222L670 1210L700 1212L715 1228L660 1222zM565 1225L585 1215L600 1225L590 1240zM510 1172h20v5h-20zM545 1173l15 4-15 1zM705 1118l25-2v8zM870 1138l25 10-15-2zM1230 1180h18v5h-18zM1340 1195L1400 1220L1410 1240L1390 1225zM668 122l12-7-8 10zM626 185l8-4-6 8zM400 908h8v3h-8zM366 938l12-4-8 7zM586 962h4v12h-4zM603 1130l14 6h-10zM700 3l24 0-4 8zM710 38l14-8-6 12zM490 268h4v4h-4z"/></g>
            <path class="state" d="M0 55L40 40L80 70L140 75L165 60L160 0M20 90L25 190L60 195L80 240L140 235L170 235L180 70L250 60L280 40L330 60L320 100L385 160M0 190L60 195M140 235L200 230L200 260L270 290M100 250L75 300L60 330L40 360M160 0L200 30L240 60M330 60L430 65M320 100L315 150L340 155"/>
            <path class="nation" d="M35 1045L70 1080L130 1065L195 1065L230 1010L235 965L290 970M1048 1200V1300"/><circle cx="298" cy="597" r="8" fill="none" stroke="#b8bcbc" stroke-width="2"/>
          </g></g>

          <g class="country" fill="#777">
            <text x="2635" y="765" textLength="152">Kazakhstan</text><text x="3458" y="809" textLength="119">Mongolia</text><text x="2635" y="970" textLength="57">stan</text><text x="2801" y="978" textLength="147">Kyrgyzstan</text><text x="2731" y="1056" textLength="128">Tajikistan</text><text x="2634" y="1196" textLength="127">ghanistan</text><text x="3453" y="1151" textLength="74">China</text><text x="4278" y="1125" textLength="79">Japan</text><text x="2664" y="1344" textLength="113">Pakistan</text><text x="3048" y="1343" textLength="76">Nepal</text><text x="3148" y="1441" textLength="153">Bangladesh</text><text x="2932" y="1493" textLength="63">India</text><text x="3307" y="1500" textLength="124">Myanmar</text><text x="3315" y="1537" textLength="108">(Burma)</text><text x="3477" y="1549" textLength="60">Laos</text><text x="3415" y="1661" textLength="111">Thailand</text><text x="3582" y="1680" textLength="107">Vietnam</text><text x="2951" y="1834" textLength="125">Sri Lanka</text><text x="2788" y="1934" textLength="116">Maldives</text><text x="3442" y="1905" textLength="114">Malaysia</text><text x="3890" y="1740" textLength="147">Philippines</text><text x="3776" y="2058" textLength="126">Indonesia</text><text x="4393" y="2125" textLength="148">Papua New</text>
          </g>
          <g class="country small" fill="#777">
            <text x="4001" y="1008" textLength="103">North Korea</text><text x="4030" y="1118" textLength="104">South Korea</text><text x="3202" y="1359" textLength="60">Bhutan</text><text x="3490" y="1972" textLength="86">Singapore</text><text x="3889" y="1451" textLength="59">Taiwan</text><text x="3747" y="1899" textLength="56">Brunei</text>
          </g>
          <g class="city">
            <text x="3125" y="923" textLength="87">Ürümqi/</text><text x="3116" y="951" textLength="104">Wulumuqi</text><text x="3623" y="1201" textLength="50">Xi’an</text><text x="3635" y="980" textLength="69">Baotou</text><text x="3494" y="1257" textLength="89">Chengdu</text><text x="4013" y="822" textLength="68">Harbin</text><text x="3961" y="882" textLength="113">Changchun</text><text x="3926" y="946" textLength="98">Shenyang</text><text x="3782" y="1003" textLength="69">Beijing</text><text x="4336" y="908" textLength="85">Sapporo</text><text x="4126" y="1197" textLength="106">Hiroshima</text><text x="3700" y="1186" textLength="111">Zhengzhou</text><text x="3884" y="1282" textLength="94">Shanghai</text><text x="2666" y="1406" textLength="77">Karachi</text><text x="3559" y="1363" textLength="79">Guiyang</text><text x="3148" y="1500" textLength="74">Kolkata</text><text x="3551" y="1500" textLength="56">Hanoi</text><text x="3592" y="1456" textLength="84">Nanning</text><text x="2795" y="1550" textLength="81">Mumbai</text><text x="2962" y="1687" textLength="83">Chennai</text><text x="3324" y="1638" textLength="72">Yangon</text><text x="3517" y="1778" textLength="165">Ho Chi Minh City</text><text x="3568" y="2122" textLength="71">Jakarta</text><text x="3755" y="1348" textLength="101">Nanchang</text><text x="3903" y="1402" textLength="61">Taipei</text><text x="3712" y="1508" textLength="109">Hong Kong</text><text x="3886" y="1652" textLength="68">Manila</text>
          </g>
          <g class="province">
            <text x="2897" y="1190" textLength="42">J.K.</text><text x="2912" y="1243" textLength="46">H.P.</text><text x="2869" y="1279" textLength="54">PUN.</text><text x="2956" y="1288" textLength="48">UTT.</text><text x="2986" y="1361" textLength="44">U.P.</text><text x="2820" y="1371" textLength="48">RAJ.</text><text x="2779" y="1455" textLength="49">GUJ.</text><text x="3308" y="1336" textLength="44">A.P.</text><text x="3299" y="1393" textLength="52">NAG.</text><text x="3088" y="1460" textLength="49">JHA.</text><text x="3016" y="1506" textLength="50">CHH.</text><text x="3078" y="1536" textLength="45">ODI.</text><text x="2889" y="1548" textLength="55">MAH.</text><text x="2952" y="1586" textLength="47">TEL.</text><text x="2962" y="1649" textLength="44">A.P.</text><text x="2877" y="1661" textLength="51">KAR.</text><text x="2946" y="1744" textLength="44">T.N.</text>
          </g>
          <g class="ocean">
            <text x="4519" y="542" textLength="108">Sea of</text><text x="4505" y="588" textLength="136">Okhotsk</text><text x="2635" y="1651" textLength="52">ian</text><text x="2634" y="1698">a</text><text x="3106" y="1661" textLength="107">Bay of</text><text x="3101" y="1708" textLength="117">Bengal</text><text x="4121" y="1540" textLength="169">Philippine</text><text x="4175" y="1587" textLength="61">Sea</text>
            <path id="scs" d="M3699 1844Q3785 1745 3808 1600" fill="none"/><text><textPath href="#scs" textLength="252">South China Sea</textPath></text>
          </g>
          <g fill="#666"><circle cx="3168" cy="896" r="4.500"/><circle cx="3649" cy="1173" r="4.500"/><circle cx="3668" cy="991" r="4.500"/><circle cx="3540" cy="1270" r="4.500"/><circle cx="4047" cy="835" r="4.500"/><circle cx="4017" cy="894" r="4.500"/><circle cx="3975" cy="957" r="4.500"/><circle cx="3817" cy="1015" r="4.500"/><circle cx="4380" cy="920" r="4.500"/><circle cx="4179" cy="1169" r="4.500"/><circle cx="3755" cy="1159" r="4.500"/><circle cx="3932" cy="1255" r="4.500"/><circle cx="2704" cy="1416" r="4.500"/><circle cx="3599" cy="1375" r="4.500"/><circle cx="3185" cy="1474" r="4.500"/><circle cx="3579" cy="1512" r="4.500"/><circle cx="3635" cy="1468" r="4.500"/><circle cx="2835" cy="1561" r="4.500"/><circle cx="3003" cy="1698" r="4.500"/><circle cx="3361" cy="1613" r="4.500"/><circle cx="3600" cy="1751" r="4.500"/><circle cx="3805" cy="1322" r="4.500"/><circle cx="3934" cy="1412" r="4.500"/><circle cx="3766" cy="1480" r="4.500"/><circle cx="3920" cy="1665" r="4.500"/></g>

          <g class="demes">
            <path d="M3087.600 1336.500V1268.500A68 68 0 1 1 3020.200 1327.800z" fill="#6030b0" stroke="#5b2eb0"/>
            <path d="M3087.600 1336.500L3020.200 1327.800A68 68 0 0 1 3031.200 1298.300z" fill="#62a6c0" stroke="#4c99bf"/>
            <path d="M3087.600 1336.500L3031.200 1298.300A68 68 0 0 1 3087.600 1268.500z" fill="#e67a3c" stroke="#e87c36"/>
            <circle cx="2970" cy="1510" r="43" fill="#e67a3c" stroke="#e87c36"/><circle cx="4344.700" cy="1131.800" r="27" fill="#e67a3c" stroke="#e87c36"/>
          </g>
          <g class="mapbox"><circle cx="2684" cy="2064" r="21" fill="#eceeee" stroke="#4d5254" stroke-width="3"/><path d="M2675 2074q-2-22 11-22a10.500 10.500 0 0 1 10 11q0 12-21 11z" fill="#4d5254"/><path d="M2687 2055l2 5.500 5.500 2-5.500 2-2 5.500-2-5.500-5.500-2 5.500-2z" fill="#fff"/><text x="2712" y="2074" textLength="131" lengthAdjust="spacingAndGlyphs">mapbox</text></g>
        </svg>
        <div class="zoomer"><svg viewBox="0 0 81 87"><path d="M23.500 45.500H57M40.500 28.500V63" stroke="#000" stroke-width="6"/></svg><svg viewBox="0 0 81 87"><path d="M23.500 46H57" stroke="#000" stroke-width="6"/></svg></div>
        <p class="credit"><a>Leaflet</a> | © <a>Mapbox</a> © <a>OpenStreetMap</a> <a><b>Improve this map</b></a></p>
        </div>
      </section>
    </div>

    <section class="diversity">
      <div class="head"><h2>Diversity</h2><div class="toggles"><span class="btn b-ent"><b>ENTROPY</b><b class="off">EVENTS</b></span><span class="btn b-aa"><b>AA</b><b class="off">NT</b></span></div></div>
      <svg class="entropy" viewBox="515 2240 200 62"><path d="M582 2250.500H600V2310M582 2279H600" fill="none" stroke="#000" stroke-width="2.600"/><text x="573" y="2289.500">1.0</text></svg>
    </section>
  </main>
</div>
</body>
</html>
```
FILE: styles.css
```css
/* 1rem = 100 design units; the design is 47.34rem wide */
html { font-size: 86.523px; }
* { box-sizing: border-box; margin: 0; padding: 0; }
body { width: 100vw; height: 100vh; overflow: hidden; background: #fff; font-family: Lato, "Open Sans", sans-serif; font-size: .385rem; line-height: 1.2; color: #333; display: flex; flex-direction: column; }
svg { display: block; flex: none; overflow: hidden; }
.defs { position: absolute; }
p, h1, h2, span, li { white-space: nowrap; }
a { color: #5097ba; text-decoration: none; }
h1, h2 { font-weight: 400; }
em { font-style: normal; }
.on { color: #5097ba; }

/* browser bar */
.browser { height: .68rem; flex: none; overflow: hidden; background: #636363; border-bottom: .02rem solid #858585; padding-top: .02rem; display: flex; align-items: flex-start; }
.omnibox { width: 37.77rem; height: .56rem; flex: none; background: #202124; border-radius: 0 .09rem .09rem 0; display: flex; align-items: center; padding-left: .22rem; }
.lock { width: .16rem; height: .22rem; }
.url { margin-left: .26rem; font: .2995rem/1.2 Roboto, sans-serif; color: #9aa0a6; flex: 1; }
.url b { font-weight: 400; color: #fff; }
.magnify { width: .26rem; height: .26rem; margin-right: .24rem; }
.bar { width: .02rem; height: .31rem; background: #8a8c8e; margin-right: .23rem; }
.shield { position: relative; margin-right: .2rem; }
.shield svg { width: .3rem; height: .36rem; }
.shield em { position: absolute; left: .23rem; top: -.02rem; width: .24rem; height: .24rem; border-radius: .12rem; background: #5d6270; color: #fff; font: .18rem/.24rem Roboto, sans-serif; text-align: center; }
.extensions { display: flex; gap: .32rem; margin: .12rem 0 0 .29rem; }
.extensions > *, .counter svg { width: .32rem; height: .32rem; flex: none; }
.counter { position: relative; }
.counter em { position: absolute; left: .12rem; top: .2rem; width: .32rem; height: .24rem; border-radius: .04rem; background: #e65443; color: #222; font: .22rem/.25rem Roboto, sans-serif; text-align: center; }

.page { flex: 1; display: flex; min-height: 0; }

/* controls */
.sidebar { width: 4.31rem; flex: none; background: #f2f2f2; border-right: .02rem solid #e5e5e5; display: flex; flex-direction: column; overflow: hidden; }
.sidebar > *, .main > * { flex: none; }
.date { display: flex; margin-top: .144rem; height: .4rem; font-size: .33rem; color: #000; }
.date span:first-child { width: .1rem; display: flex; justify-content: flex-end; }
.date span:nth-child(2) { width: 3.13rem; text-align: right; }
.date svg { width: .35rem; height: .38rem; margin-left: .15rem; }
.reset { width: 3.53rem; height: .46rem; margin-top: .34rem; display: flex; justify-content: flex-end; }
.reset svg { width: .38rem; height: .4rem; margin: -.02rem .1rem 0 0; }
.info { width: .44rem; height: .44rem; margin-left: 3.2rem; }
.info-color { margin-top: .97rem; }
.info-filter { margin-top: .65rem; }
.select { width: 3.86rem; height: 1.06rem; background: #fff; border: .02rem solid #ccc; border-left: 0; border-radius: 0 .11rem .11rem 0; position: relative; display: flex; align-items: flex-start; padding-top: .27rem; }
.select span { display: flex; justify-content: flex-end; }
.select svg { width: .28rem; height: .14rem; margin: .13rem .23rem 0 auto; }
.select-color { margin-top: .26rem; }
.select-color span { width: 2.78rem; }
.query { margin-top: .26rem; color: #aaa; }
.query span { width: 1.91rem; margin-top: .02rem; }
.note { width: 2.87rem; height: .4rem; margin-top: .154rem; font-size: .33rem; color: #000; display: flex; justify-content: flex-end; }
.chip { position: relative; display: flex; background: #fff; border: .02rem solid #b9d8e6; border-radius: .05rem; overflow: hidden; color: #5097ba; }
.wash { position: absolute; inset: 0; width: 100%; height: 100%; }
.cell { position: relative; display: flex; align-items: center; justify-content: center; }
.cell + .cell { border-left: .02rem solid #b9d8e6; }
.eye { width: .38rem; height: .31rem; }
.trash { width: .34rem; height: .38rem; }
.side-chip { width: 1.1rem; height: .54rem; margin-top: .19rem; border-left: 0; border-radius: 0 .05rem .05rem 0; }
.side-chip .cell:nth-child(2) { width: .5rem; padding-right: .06rem; }
.side-chip .cell:nth-child(3) { flex: 1; }
.options { display: flex; margin-top: .6rem; height: .53rem; font-size: .44rem; color: #000; }
.options span { width: .23rem; display: flex; justify-content: flex-end; }
.options .info { margin: .09rem 0 0 2.97rem; }
.layouts { list-style: none; margin-top: 1.01rem; display: flex; flex-direction: column; gap: .57rem; }
.layouts li { height: .46rem; display: flex; justify-content: flex-end; }
.w-ngular { width: 1.54rem; }
.w-l { width: .13rem; }
.w-oted { width: .91rem; }
.w-k { width: .03rem; }
.w-er { width: .39rem; }
.metric { width: 2.02rem; height: .46rem; margin-top: 1.52rem; display: flex; justify-content: flex-end; }
.selects { margin-top: 1.16rem; display: flex; flex-direction: column; gap: .685rem; }
.selects .select { flex: none; padding-top: .29rem; }
.s-labels span { width: 2.38rem; }
.s-tips span { width: .34rem; }

.gutter { width: .28rem; flex: none; background: #fafafa; border-right: .02rem solid #e8e8e8; }
.collapse { width: .18rem; height: .27rem; margin: .51rem 0 0 .03rem; }
.thumb { width: .16rem; height: 13.22rem; margin: 3.53rem 0 0 .06rem; border-radius: .08rem; background: #c1c1c1; }

/* content */
.main { flex: 1; min-width: 0; padding-left: .56rem; display: flex; flex-direction: column; overflow: hidden; }
h1 { margin-top: .23rem; height: .924rem; font-size: .77rem; letter-spacing: -.0105rem; }
.byline { display: flex; height: .95rem; margin-top: .066rem; font-size: .405rem; color: #555; align-items: flex-start; }
.byline p { margin-top: .2rem; }
.virus { width: .9rem; height: .85rem; margin: .05rem .08rem 0 0; }
.gisaid { width: 1.78rem; height: .64rem; margin: .16rem .05rem 0 .11rem; }
.gisaid text { font: 900 46px Lato, sans-serif; fill: #fff; }
.summary { display: flex; height: .6rem; margin: .26rem 0 0 .05rem; color: #888; font-size: .385rem; }
.summary p { margin-top: .07rem; }
.main-chip { width: 3.22rem; height: .6rem; margin-left: .17rem; }
.main-chip .cell { width: .58rem; }
.main-chip .name { width: 2.01rem; font-weight: 300; -webkit-text-stroke: .3px #5097ba; }
.summary .stop { margin-left: .07rem; }

.panels { display: flex; gap: .7rem; margin-top: .68rem; }
.panel { width: 20.49rem; flex: none; border-top: .025rem solid #bbb; }
.head { display: flex; justify-content: space-between; height: .65rem; }
.head.geo { height: .765rem; }
h2 { font-size: .443rem; }
.buttons { display: flex; gap: .11rem; }
.btn { height: .61rem; border: .02rem solid #ccc; border-top: 0; border-radius: 0 0 .07rem .07rem; font-size: .33rem; display: flex; justify-content: center; padding-top: .08rem; }
.b-zoom { width: .72rem; }
.b-zoom svg { width: .34rem; height: .34rem; margin-top: .01rem; }
.b-sel { width: 3.63rem; color: #bbb; margin-left: .02rem; }
.b-reset { width: 2.72rem; }
.b-geo { width: 2.46rem; }
.legend { display: flex; height: .41rem; margin-left: .11rem; font-size: .33rem; }
.legend svg { width: .32rem; height: .22rem; margin: .13rem 0 0 .06rem; }
.tree { width: 20.48rem; height: 15.85rem; }
.minor { stroke: #ebebeb; stroke-width: 3; }
.major { stroke: #dadada; stroke-width: 5; }
.trunk { fill: none; stroke: #b4b6b8; stroke-linecap: round; stroke-linejoin: round; }
.t28 { stroke-width: 28; }
.t22 { stroke-width: 22; }
.t20 { stroke-width: 20; }
.t17 { stroke-width: 16.500; }
.limb { fill: none; stroke-width: 16; stroke-linecap: round; }
.orange { stroke: #cc9d82; }
.purple { stroke: #9179b5; }
.blue { stroke: #8dacb8; }
.tip-orange { fill: #ff9040; stroke: #e77a30; stroke-width: 2.500; }
.tip-purple { fill: #6426d6; stroke: #4e1fae; stroke-width: 2.500; }
.tip-blue { fill: #62c0ea; stroke: #4c99bf; stroke-width: 2.500; }
.clade { font: 700 38.800px Lato, sans-serif; fill: #777; text-anchor: end; }
.strain { font: 33px Lato, sans-serif; fill: #000; }
.axis { font: 33px Lato, sans-serif; fill: #333; text-anchor: middle; }

/* map */
.map { position: relative; width: 20.47rem; height: 16.01rem; }
.tiles { width: 100%; height: 100%; }
.land, .island { fill: #f2f2f1; }
.sea { fill: #c9d1d3; }
.shade { opacity: .12; }
.state, .nation { fill: none; stroke-linejoin: round; }
.state { stroke: #dcdcdc; stroke-width: 2.200; }
.nation { stroke: #cdcdcd; stroke-width: 2.800; }
.country, .city, .province { font-family: Roboto, sans-serif; stroke: #f4f4f3; stroke-width: 4; stroke-linejoin: round; paint-order: stroke; }
.country { font-size: 28px; font-weight: 500; }
.small { font-size: 21px; }
.city { font-size: 23.500px; fill: #8f8f8f; }
.province { font-size: 19px; font-weight: 500; fill: #a4a4a4; stroke-width: 2; }
.ocean { font: italic 29px Roboto, sans-serif; fill: #8a9999; }
.demes { fill-opacity: .7; stroke-width: 2.500; }
.mapbox text { font: 700 36px Lato, sans-serif; fill: #fff; stroke: #4d5254; stroke-width: 5; paint-order: stroke; }
.zoomer { position: absolute; left: 19.24rem; top: 13.44rem; width: .95rem; height: 1.83rem; border: .05rem solid rgba(0, 0, 0, .22); background: #fff; background-clip: padding-box; border-radius: .12rem; display: flex; flex-direction: column; }
.zoomer svg { width: 100%; height: 50%; }
.zoomer svg + svg { border-top: .02rem solid #ccc; }
.credit { position: absolute; right: 0; bottom: 0; height: .46rem; padding: .045rem .14rem 0 .15rem; background: rgba(255, 255, 255, .7); font-size: .2895rem; }
.credit a { color: #0078a8; }

.diversity { margin-top: .385rem; width: 46rem; border-top: .025rem solid #bbb; }
.diversity .head { justify-content: flex-start; height: .68rem; }
.diversity h2 { width: 36.98rem; flex: none; margin-top: .02rem; }
.toggles { display: flex; gap: .08rem; }
.toggles b { font-weight: 400; color: #5097ba; }
.toggles .off { color: #333; }
.toggles .btn { gap: .29rem; padding-top: .07rem; height: .62rem; }
.b-ent { width: 3.73rem; }
.b-aa { width: 2rem; justify-content: flex-start; padding-left: .31rem; }
.entropy { width: 2rem; height: .62rem; }
.entropy text { font: 29px Lato, sans-serif; text-anchor: end; }
```
